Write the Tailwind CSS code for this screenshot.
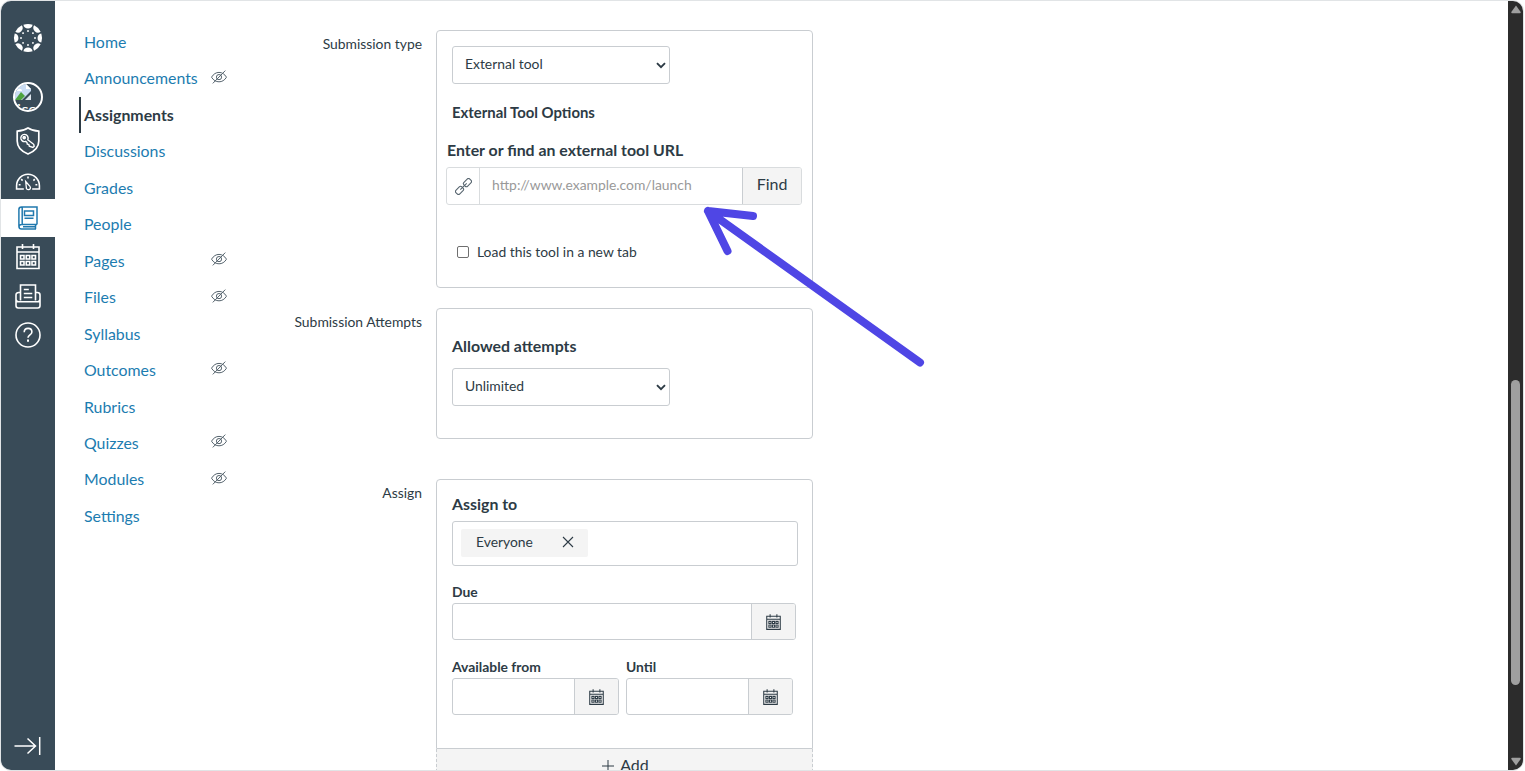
<!DOCTYPE html>
<html lang="en">
<head>
    <meta charset="UTF-8">
    <meta name="viewport" content="width=device-width, initial-scale=1.0">
    <title>Edit Assignment</title>
    <script src="https://cdn.jsdelivr.net/npm/@tailwindcss/browser@4"></script>
</head>
<body class="bg-white overflow-hidden font-['Lato',sans-serif] text-[#2d3b45]">

    <!-- Shared icons -->
    <svg class="hidden">
        <symbol id="icon-hidden" viewBox="0 0 16 14" fill="none" stroke="currentColor" stroke-width="1">
            <path d="M0.5 7.2C2.5 4 5 2.4 8 2.4s5.500 1.600 7.500 4.800C13.500 10.400 11 11.800 8 11.800S2.500 10.400 0.500 7.200z"/>
            <circle cx="8" cy="7.100" r="2.600"/>
            <path d="M14.300 0.600L1.800 13.400"/>
        </symbol>
        <symbol id="icon-calendar" viewBox="0 0 24 26" fill="none" stroke="currentColor">
            <path d="M1 3.500h22v21.500H1zM1 8.500h22M6.500 0.500v5M17.500 0.500v5"/>
            <path d="M4.500 12h3.500v3.500h-3.500zM10.250 12h3.500v3.500h-3.500zM16 12h3.500v3.500h-3.500zM4.500 18h3.500v3.500h-3.500zM10.250 18h3.500v3.500h-3.500zM16 18h3.500v3.500h-3.500z"/>
        </symbol>
        <symbol id="icon-chevron" viewBox="0 0 10 7" fill="none" stroke="currentColor" stroke-width="1.900">
            <path d="M1 1.200l4 4 4-4"/>
        </symbol>
    </svg>

    <div class="relative flex w-[1524px] h-[771px] overflow-hidden rounded-[11px] border border-[#e1e4e6]">

        <!-- Global navigation -->
        <aside class="flex flex-col items-center w-[54px] shrink-0 bg-[#394b58] text-white">
            <a class="mt-[22px] h-[30px]">
                <svg class="w-[30px] h-[30px]" viewBox="-15 -15 30 30" fill="currentColor">
                    <g id="mark">
                        <path d="M-4.600 -13.300Q0 -14.900 4.600 -13.300A4.700 4.700 0 0 1 -4.600 -13.300z"/>
                        <circle cx="0" cy="-7" r="0.950"/>
                    </g>
                    <use href="#mark" transform="rotate(45)"/>
                    <use href="#mark" transform="rotate(90)"/>
                    <use href="#mark" transform="rotate(135)"/>
                    <use href="#mark" transform="rotate(180)"/>
                    <use href="#mark" transform="rotate(225)"/>
                    <use href="#mark" transform="rotate(270)"/>
                    <use href="#mark" transform="rotate(315)"/>
                </svg>
            </a>
            <!-- Avatar -->
            <a class="relative mt-[29px] w-[30px] h-[30px] rounded-full border-2 border-white overflow-hidden">
                <svg class="absolute left-0 top-0 w-4 h-4" viewBox="0 0 16 16">
                    <path d="M0 0h11l5 5v11H0z" fill="#dde5ec"/>
                    <path d="M0 0h11v5h5v3L9 14 7 16H0z" fill="#c9dcf3"/>
                    <path d="M2 7c0-3 5-3 5 0z" fill="#fff"/>
                    <path d="M0 16l6-8 4 4-4 4z" fill="#4da23f"/>
                    <path d="M7 16l9-9v3l-6 6z" fill="#394b58"/>
                    <path d="M11 0v5h5z" fill="#fff"/>
                </svg>
                <span class="absolute left-[2px] top-[16px] text-[16px] leading-[18px]">ico</span>
            </a>
            <!-- Admin -->
            <a class="mt-[15px] h-7">
                <svg class="w-6 h-7" viewBox="0 0 24 28" fill="none" stroke="currentColor" stroke-width="1.700">
                    <path d="M12 1C9 3 5.500 4 1.200 4.200V14c0 6 4.500 10.500 10.800 13 6.300-2.500 10.800-7 10.800-13V4.200C18.500 4 15 3 12 1z"/>
                    <path d="M11.800 12.800c1-2.500-.500-5.300-3.200-5.400-2.700-.100-4.300 2.300-3.600 4.600.700 2 2.700 3 4.700 2.400l1.300 1.200.300 1.500 1.500.300.500 1.700 3.600 1.300 1.300-1.200-.500-1.900z" stroke-width="1.400"/>
                    <circle cx="8.200" cy="10.600" r="1"/>
                </svg>
            </a>
            <!-- Dashboard -->
            <a class="mt-[17px] h-[20px]">
                <svg class="w-[26px] h-[19px]" viewBox="0 0 28 20" fill="none" stroke="currentColor" stroke-width="1.700">
                    <path d="M9.500 18H1.700v-3.500a12.300 12.300 0 0 1 24.600 0V18H18.500"/>
                    <path d="M11.500 10l4.600 5.200c1.200 1.500.300 3.500-1.500 3.600-1.500.100-2.500-1-2.400-2.400z" stroke-width="1.400"/>
                    <path d="M14 4.500v2.200M6.700 7.500l1.500 1.500M21.300 7.500l-1.500 1.500M4 13.500h2M22 13.500h2"/>
                </svg>
            </a>
            <!-- Courses (active) -->
            <a class="mt-[7px] flex w-full h-[38px] items-center justify-center bg-white text-[#2179ae]">
                <svg class="w-5 h-6" viewBox="0 0 20 24" fill="none" stroke="currentColor" stroke-width="1.500">
                    <path d="M19 18.500V1H3.500C2 1 .900 2 .900 3.500v16.800C.900 22 2 23 3.500 23H18M19 18.500H3.500c-3.300 0-3.300 4.500 0 4.500M17.500 18.500V23M4.200 1.200v17M5 20.800h12"/>
                    <path d="M6.500 5h9v4.500h-9zM6.500 12.300h9"/>
                </svg>
            </a>
            <!-- Calendar -->
            <a class="mt-[6px] h-[27px]">
                <svg class="w-[24px] h-[27px]" stroke-width="1.600"><use href="#icon-calendar"/></svg>
            </a>
            <!-- Inbox -->
            <a class="mt-[14px] h-[25px]">
                <svg class="w-[26px] h-[25px]" viewBox="0 0 26 25" fill="none" stroke="currentColor" stroke-width="1.600">
                    <path d="M5.500 16.500V1h15v15.500M8.800 5.500h5M8.800 9.500h8.500M8.800 13.500h8.500"/>
                    <path d="M5.500 8.500H3.700c-1.500 0-2.700 1-2.700 2.500V21.500C1 23 2 24 3.300 24h19.400c1.300 0 2.300-1 2.300-2.500V11c0-1.500-1.200-2.500-2.700-2.500h-1.800M1 15.500c.300 1.500 1.100 2.300 2.500 2.300h19c1.400 0 2.200-.800 2.500-2.300"/>
                </svg>
            </a>
            <!-- Help -->
            <a class="mt-[13px] h-[26px]">
                <svg class="w-[26px] h-[26px]" viewBox="0 0 26 26" fill="none" stroke="currentColor" stroke-width="1.600">
                    <circle cx="13" cy="13" r="12"/>
                    <path d="M9.200 10.300c0-2.300 1.500-3.900 3.900-3.900 2.300 0 3.800 1.400 3.800 3.500 0 3-3.900 2.900-3.900 5.900"/>
                    <path d="M13 17.600v2.100" stroke-width="2"/>
                </svg>
            </a>
            <!-- Expand -->
            <a class="mt-auto mb-[14px] mr-px h-5">
                <svg class="w-[27px] h-5" viewBox="0 0 27 20" fill="none" stroke="currentColor" stroke-width="1.500">
                    <path d="M.500 10H21M13.500 2.500L21.500 10l-8 7.500M25.700 1v18"/>
                </svg>
            </a>
        </aside>

        <!-- Course navigation -->
        <nav class="w-[172px] ml-6 shrink-0 pt-[22.700px] text-[15.880px] text-[#1c7cb0]">
            <a class="flex h-[36.460px] items-center pl-[5px]">Home</a>
            <a class="flex h-[36.460px] items-center justify-between pl-[5px] pr-6">Announcements<svg class="w-4 h-[14px] -mt-[3px] text-[#56646e]"><use href="#icon-hidden"/></svg></a>
            <a class="flex h-[36.460px] items-center border-l-2 border-[#2d3b45] pl-[3px] font-bold text-[#2d3b45]">Assignments</a>
            <a class="flex h-[36.460px] items-center pl-[5px]">Discussions</a>
            <a class="flex h-[36.460px] items-center pl-[5px]">Grades</a>
            <a class="flex h-[36.460px] items-center pl-[5px]">People</a>
            <a class="flex h-[36.460px] items-center justify-between pl-[5px] pr-6">Pages<svg class="w-4 h-[14px] -mt-[3px] text-[#56646e]"><use href="#icon-hidden"/></svg></a>
            <a class="flex h-[36.460px] items-center justify-between pl-[5px] pr-6">Files<svg class="w-4 h-[14px] -mt-[3px] text-[#56646e]"><use href="#icon-hidden"/></svg></a>
            <a class="flex h-[36.460px] items-center pl-[5px]">Syllabus</a>
            <a class="flex h-[36.460px] items-center justify-between pl-[5px] pr-6">Outcomes<svg class="w-4 h-[14px] -mt-[3px] text-[#56646e]"><use href="#icon-hidden"/></svg></a>
            <a class="flex h-[36.460px] items-center pl-[5px]">Rubrics</a>
            <a class="flex h-[36.460px] items-center justify-between pl-[5px] pr-6">Quizzes<svg class="w-4 h-[14px] -mt-[3px] text-[#56646e]"><use href="#icon-hidden"/></svg></a>
            <a class="flex h-[36.460px] items-center justify-between pl-[5px] pr-6">Modules<svg class="w-4 h-[14px] -mt-[3px] text-[#56646e]"><use href="#icon-hidden"/></svg></a>
            <a class="flex h-[36.460px] items-center pl-[5px]">Settings</a>
        </nav>

        <!-- Assignment form -->
        <main class="flex-1 pt-[29px] text-[13.880px] leading-5">
            <div class="flex">
                <div class="w-[171px] shrink-0 pt-1 text-right">Submission type</div>
                <section class="ml-[14px] w-[377px] h-[258px] rounded-[4px] border border-[#c9cdd1]">
                    <div class="ml-[15px] mt-[15px] flex h-[38px] w-[218px] items-center justify-between rounded-[3px] border border-[#c9cdd1] pl-3 pr-[3px]">
                        <span class="-mt-[3px]">External tool</span>
                        <svg class="w-[10px] h-[7px] mt-px"><use href="#icon-chevron"/></svg>
                    </div>
                    <h3 class="ml-[15px] mt-[18px] text-[14.880px] leading-5 font-bold">External Tool Options</h3>
                    <label class="block ml-[10px] mt-[18px] text-[15.880px] leading-5 font-bold">Enter or find an external tool URL</label>
                    <div class="ml-[9px] mt-[7px] flex w-[356px] h-[38px] rounded-[3px] border border-[#d9dcde] overflow-hidden">
                        <div class="flex w-[33px] items-center justify-center border-r border-[#d9dcde]">
                            <svg class="w-[17px] h-[17px] ml-px" viewBox="0 0 16 16" fill="none" stroke="#56646e" stroke-width="1">
                                <rect x="-3.900" y="-2.500" width="7.800" height="5" rx="1.800" transform="translate(4.300 11.700) rotate(-45)"/>
                                <rect x="-3.900" y="-2.500" width="7.800" height="5" rx="1.800" transform="translate(11.700 4.300) rotate(-45)"/>
                                <path d="M5 11l6-6"/>
                            </svg>
                        </div>
                        <div class="flex flex-1 items-center pl-3 pb-[3px] text-[#999]">http://www.example.com/launch</div>
                        <button class="w-[59px] border-l border-[#c9cdd1] bg-[#f4f4f4] pb-[4px] text-[16px]">Find</button>
                    </div>
                    <label class="ml-5 mt-[37px] flex items-center gap-2">
                        <span class="w-3 h-3 rounded-[2px] border border-[#6f6f6f]"></span>
                        Load this tool in a new tab
                    </label>
                </section>
            </div>

            <div class="mt-5 flex">
                <div class="w-[171px] shrink-0 pt-1 text-right">Submission Attempts</div>
                <section class="ml-[14px] w-[377px] h-[131px] rounded-[4px] border border-[#c9cdd1]">
                    <h3 class="ml-[15px] mt-[27px] text-[15.880px] leading-5 font-bold">Allowed attempts</h3>
                    <div class="ml-[15px] mt-[12px] flex h-[38px] w-[218px] items-center justify-between rounded-[3px] border border-[#c9cdd1] pl-3 pr-[3px]">
                        <span class="-mt-[3px]">Unlimited</span>
                        <svg class="w-[10px] h-[7px] mt-px"><use href="#icon-chevron"/></svg>
                    </div>
                </section>
            </div>

            <div class="mt-10 flex">
                <div class="w-[171px] shrink-0 pt-1 text-right">Assign</div>
                <div class="ml-[14px] w-[377px]">
                    <section class="h-[270px] rounded-t-[4px] border border-[#c9cdd1] pl-[15px]">
                        <h3 class="mt-[14px] text-[15.880px] leading-5 font-bold">Assign to</h3>
                        <div class="mt-[7px] flex h-[45px] w-[346px] rounded-[3px] border border-[#c9cdd1] px-2 pt-[7px]">
                            <span class="flex h-[28px] w-[127px] items-center justify-between rounded-[2px] bg-[#f4f4f4] pl-[15px] pr-[14px] pb-[2px]">
                                Everyone
                                <svg class="w-3 h-3" viewBox="0 0 12 12" fill="none" stroke="currentColor" stroke-width="1.100"><path d="M1 1l10 10M11 1L1 11"/></svg>
                            </span>
                        </div>
                        <label class="mt-4 block leading-5 font-bold">Due</label>
                        <div class="mt-px flex h-[37px] w-[344px] rounded-[3px] border border-[#c9cdd1] overflow-hidden">
                            <div class="flex-1"></div>
                            <div class="flex w-[44px] items-center justify-center border-l border-[#c9cdd1] bg-[#f4f4f4]">
                                <svg class="w-[17px] h-4" stroke-width="1.700"><use href="#icon-calendar"/></svg>
                            </div>
                        </div>
                        <div class="mt-[17px] flex gap-[7px]">
                            <div class="w-[167px]">
                                <label class="block leading-5 font-bold">Available from</label>
                                <div class="mt-px flex h-[37px] rounded-[3px] border border-[#c9cdd1] overflow-hidden">
                                    <div class="flex-1"></div>
                                    <div class="flex w-[44px] items-center justify-center border-l border-[#c9cdd1] bg-[#f4f4f4]">
                                        <svg class="w-[17px] h-4" stroke-width="1.700"><use href="#icon-calendar"/></svg>
                                    </div>
                                </div>
                            </div>
                            <div class="w-[167px]">
                                <label class="block leading-5 font-bold">Until</label>
                                <div class="mt-px flex h-[37px] rounded-[3px] border border-[#c9cdd1] overflow-hidden">
                                    <div class="flex-1"></div>
                                    <div class="flex w-[44px] items-center justify-center border-l border-[#c9cdd1] bg-[#f4f4f4]">
                                        <svg class="w-[17px] h-4" stroke-width="1.700"><use href="#icon-calendar"/></svg>
                                    </div>
                                </div>
                            </div>
                        </div>
                    </section>
                    <button class="flex h-[38px] w-full items-center justify-center gap-[6px] border-x border-dashed border-[#c9cdd1] bg-[#f4f4f4] pb-[6px] pl-[2px] text-[16px]">
                        <svg class="w-3 h-3 mt-[2px]" viewBox="0 0 12 12" stroke="currentColor" stroke-width="1"><path d="M6 0v12M0 6h12"/></svg>
                        Add
                    </button>
                </div>
            </div>
        </main>

        <!-- Scrollbar -->
        <div class="flex w-[15px] shrink-0 flex-col items-center bg-[#2c2c2c]">
            <svg class="mt-[4px] w-[10px] h-[9px]" viewBox="0 0 10 9" fill="#9f9f9f"><path d="M5 .500L9.700 7q.300 1.200-.900 1.200H1.200Q0 8.200.300 7z"/></svg>
            <div class="mt-[366px] h-[305px] w-[9px] rounded-full bg-[#9f9f9f]"></div>
            <svg class="mt-auto mb-[4px] w-[10px] h-[9px]" viewBox="0 0 10 9" fill="#9f9f9f"><path d="M5 8.500L9.700 2Q10 .800 8.800.800H1.200Q0 .800.300 2z"/></svg>
        </div>

        <!-- Arrow pointing at the URL field -->
        <svg class="absolute left-[694px] top-[199px] w-[240px] h-[180px]" viewBox="695 200 240 180" fill="none" stroke="#4f46e5" stroke-width="8" stroke-linecap="round" stroke-linejoin="round">
            <path d="M920 362.500L708 211M753 216L708 211L727.500 251"/>
        </svg>
    </div>
</body>
</html>
